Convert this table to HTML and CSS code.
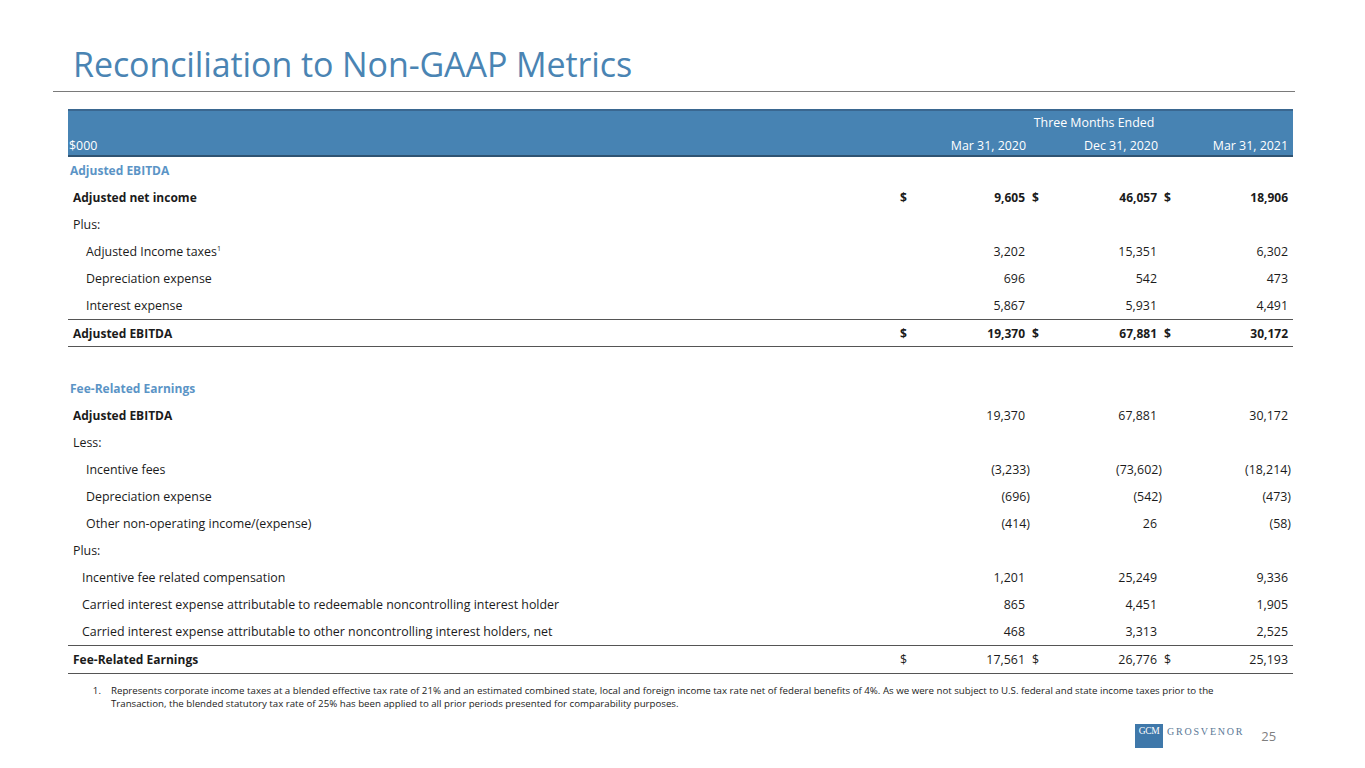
FILE: index.html
```html
<!DOCTYPE html>
<html lang="en">
<head>
<meta charset="utf-8">
<title>Reconciliation to Non-GAAP Metrics</title>
<link rel="stylesheet" href="styles.css">
</head>
<body>
<div class="slide">
  <h1 class="title">Reconciliation to Non-GAAP Metrics</h1>
  <div class="title-rule"></div>

  <table class="recon">
    <colgroup>
      <col class="c-label">
      <col class="c-cur">
      <col class="c-val1">
      <col class="c-cur">
      <col class="c-val2">
      <col class="c-cur">
      <col class="c-val3">
    </colgroup>
    <thead>
      <tr class="h1">
        <th></th>
        <th colspan="6" class="span">Three Months Ended</th>
      </tr>
      <tr class="h2">
        <th class="unit">$000</th>
        <th colspan="2" class="date">Mar 31, 2020</th>
        <th colspan="2" class="date">Dec 31, 2020</th>
        <th colspan="2" class="date">Mar 31, 2021</th>
      </tr>
    </thead>
    <tbody>
      <tr class="section"><td colspan="7">Adjusted EBITDA</td></tr>
      <tr class="bold">
        <td class="lbl">Adjusted net income</td>
        <td class="cur">$</td><td class="num">9,605</td>
        <td class="cur">$</td><td class="num">46,057</td>
        <td class="cur">$</td><td class="num">18,906</td>
      </tr>
      <tr><td class="lbl">Plus:</td><td></td><td></td><td></td><td></td><td></td><td></td></tr>
      <tr>
        <td class="lbl sub">Adjusted Income taxes<sup>1</sup></td>
        <td></td><td class="num">3,202</td>
        <td></td><td class="num">15,351</td>
        <td></td><td class="num">6,302</td>
      </tr>
      <tr>
        <td class="lbl sub">Depreciation expense</td>
        <td></td><td class="num">696</td>
        <td></td><td class="num">542</td>
        <td></td><td class="num">473</td>
      </tr>
      <tr>
        <td class="lbl sub">Interest expense</td>
        <td></td><td class="num">5,867</td>
        <td></td><td class="num">5,931</td>
        <td></td><td class="num">4,491</td>
      </tr>
      <tr class="bold total">
        <td class="lbl">Adjusted EBITDA</td>
        <td class="cur">$</td><td class="num">19,370</td>
        <td class="cur">$</td><td class="num">67,881</td>
        <td class="cur">$</td><td class="num">30,172</td>
      </tr>
      <tr class="blank"><td colspan="7"></td></tr>

      <tr class="section"><td colspan="7">Fee-Related Earnings</td></tr>
      <tr class="bold">
        <td class="lbl">Adjusted EBITDA</td>
        <td></td><td class="num plain">19,370</td>
        <td></td><td class="num plain">67,881</td>
        <td></td><td class="num plain">30,172</td>
      </tr>
      <tr><td class="lbl">Less:</td><td></td><td></td><td></td><td></td><td></td><td></td></tr>
      <tr>
        <td class="lbl sub">Incentive fees</td>
        <td></td><td class="num neg">(3,233)</td>
        <td></td><td class="num neg">(73,602)</td>
        <td></td><td class="num neg">(18,214)</td>
      </tr>
      <tr>
        <td class="lbl sub">Depreciation expense</td>
        <td></td><td class="num neg">(696)</td>
        <td></td><td class="num neg">(542)</td>
        <td></td><td class="num neg">(473)</td>
      </tr>
      <tr>
        <td class="lbl sub">Other non-operating income/(expense)</td>
        <td></td><td class="num neg">(414)</td>
        <td></td><td class="num">26</td>
        <td></td><td class="num neg">(58)</td>
      </tr>
      <tr><td class="lbl">Plus:</td><td></td><td></td><td></td><td></td><td></td><td></td></tr>
      <tr>
        <td class="lbl sub2">Incentive fee related compensation</td>
        <td></td><td class="num">1,201</td>
        <td></td><td class="num">25,249</td>
        <td></td><td class="num">9,336</td>
      </tr>
      <tr>
        <td class="lbl sub2">Carried interest expense attributable to redeemable noncontrolling interest holder</td>
        <td></td><td class="num">865</td>
        <td></td><td class="num">4,451</td>
        <td></td><td class="num">1,905</td>
      </tr>
      <tr>
        <td class="lbl sub2">Carried interest expense attributable to other noncontrolling interest holders, net</td>
        <td></td><td class="num">468</td>
        <td></td><td class="num">3,313</td>
        <td></td><td class="num">2,525</td>
      </tr>
      <tr class="total fre">
        <td class="lbl strong">Fee-Related Earnings</td>
        <td class="cur">$</td><td class="num">17,561</td>
        <td class="cur">$</td><td class="num">26,776</td>
        <td class="cur">$</td><td class="num">25,193</td>
      </tr>
    </tbody>
  </table>

  <ol class="notes">
    <li>Represents corporate income taxes at a blended effective tax rate of 21% and an estimated combined state, local and foreign income tax rate net of federal benefits of 4%. As we were not subject to U.S. federal and state income taxes prior to the Transaction, the blended statutory tax rate of 25% has been applied to all prior periods presented for comparability purposes.</li>
  </ol>

  <div class="footer">
    <div class="logo">
      <span class="logo-box">GCM</span>
      <span class="logo-word">GROSVENOR</span>
    </div>
    <span class="page">25</span>
  </div>
</div>
</body>
</html>
```

FILE: styles.css
```css
html, body {
  margin: 0;
  padding: 0;
  background: #ffffff;
}

.slide {
  width: 1365px;
  height: 768px;
  position: relative;
  font-family: "Open Sans", "Noto Sans", sans-serif;
  font-variant-ligatures: none;
  color: #1b1b1b;
  overflow: hidden;
}

.title {
  margin: 0;
  padding: 44px 0 0 73px;
  height: 47px;
  font-weight: normal;
  font-size: 34px;
  line-height: 40px;
  letter-spacing: -0.1px;
  color: #4a84b3;
}

.title-rule {
  margin: 0 70px 0 53px;
  border-top: 1px solid #7a7a7a;
  height: 0;
}

.recon {
  margin: 17px 0 0 68px;
  width: 1225px;
  border-collapse: collapse;
  table-layout: fixed;
  font-size: 12.4px;
}

.c-label { width: 827px; }
.c-cur { width: 20px; }
.c-val1 { width: 116px; }
.c-val2 { width: 112px; }
.c-val3 { width: 110px; }

.recon thead tr {
  background: #4783b3;
  color: #ffffff;
}

.recon thead th {
  font-weight: normal;
  padding: 0;
  white-space: nowrap;
}

.recon .h1 th {
  height: 22px;
  border-top: 2px solid #3a6790;
  vertical-align: middle;
}

.recon .h2 th {
  height: 19px;
  border-bottom: 2px solid #2f5473;
  vertical-align: middle;
  padding-top: 3px;
}

.recon .span {
  text-align: center;
}

.recon .unit {
  text-align: left;
  padding-left: 1px;
}

.recon .date {
  text-align: right;
  padding-right: 5px;
}

.recon td {
  height: 27px;
  padding: 0;
  vertical-align: middle;
  white-space: nowrap;
}

.recon .section td {
  color: #5b94c6;
  font-weight: bold;
  font-size: 12px;
  padding-left: 2px;
}

.recon .lbl {
  padding-left: 5px;
}

.recon .lbl.sub {
  padding-left: 18px;
}

.recon .lbl.sub2 {
  padding-left: 14px;
}

.recon .lbl.strong {
  font-weight: bold;
  font-size: 12px;
}

.recon .bold td {
  font-weight: bold;
  font-size: 12px;
}

.recon .bold td.plain {
  font-weight: normal;
  font-size: 12.4px;
}

.recon .cur {
  text-align: left;
  padding-left: 1px;
}

.recon tr td:nth-child(2).cur {
  padding-left: 5px;
}

.recon .num {
  text-align: right;
  padding-right: 6px;
}

.recon .num.neg {
  padding-right: 1px;
}

.recon tr td:last-child.num {
  padding-right: 5px;
}

.recon tr td:last-child.num.neg {
  padding-right: 2px;
}

.recon .total td {
  height: 26px;
  border-top: 1px solid #555555;
  border-bottom: 1px solid #555555;
}

.recon .total.fre td {
  height: 27px;
}

.recon .blank td {
  height: 28px;
}

.recon sup {
  font-size: 7px;
  line-height: 0;
  vertical-align: 5px;
}

.notes {
  margin: 10px 0 0 0;
  padding: 0 0 0 111px;
  width: 1125px;
  font-size: 9.7px;
  line-height: 13px;
  color: #1b1b1b;
}

.notes li::marker {
  content: "1.    ";
}

.footer {
  position: absolute;
  left: 1135px;
  top: 724px;
  display: flex;
  align-items: center;
}

.logo {
  display: flex;
  align-items: flex-start;
}

.logo-box {
  width: 28px;
  height: 24px;
  background: #3f78aa;
  color: #ffffff;
  font-family: "Liberation Serif", "DejaVu Serif", serif;
  font-size: 9.5px;
  line-height: 15px;
  text-align: center;
  letter-spacing: -0.3px;
}

.logo-word {
  margin-left: 4px;
  font-family: "Liberation Serif", "DejaVu Serif", serif;
  font-size: 10px;
  line-height: 15px;
  letter-spacing: 1.8px;
  color: #5a7896;
}

.page {
  margin-left: 17px;
  font-size: 13px;
  color: #7f7f7f;
  line-height: 24px;
}
```
